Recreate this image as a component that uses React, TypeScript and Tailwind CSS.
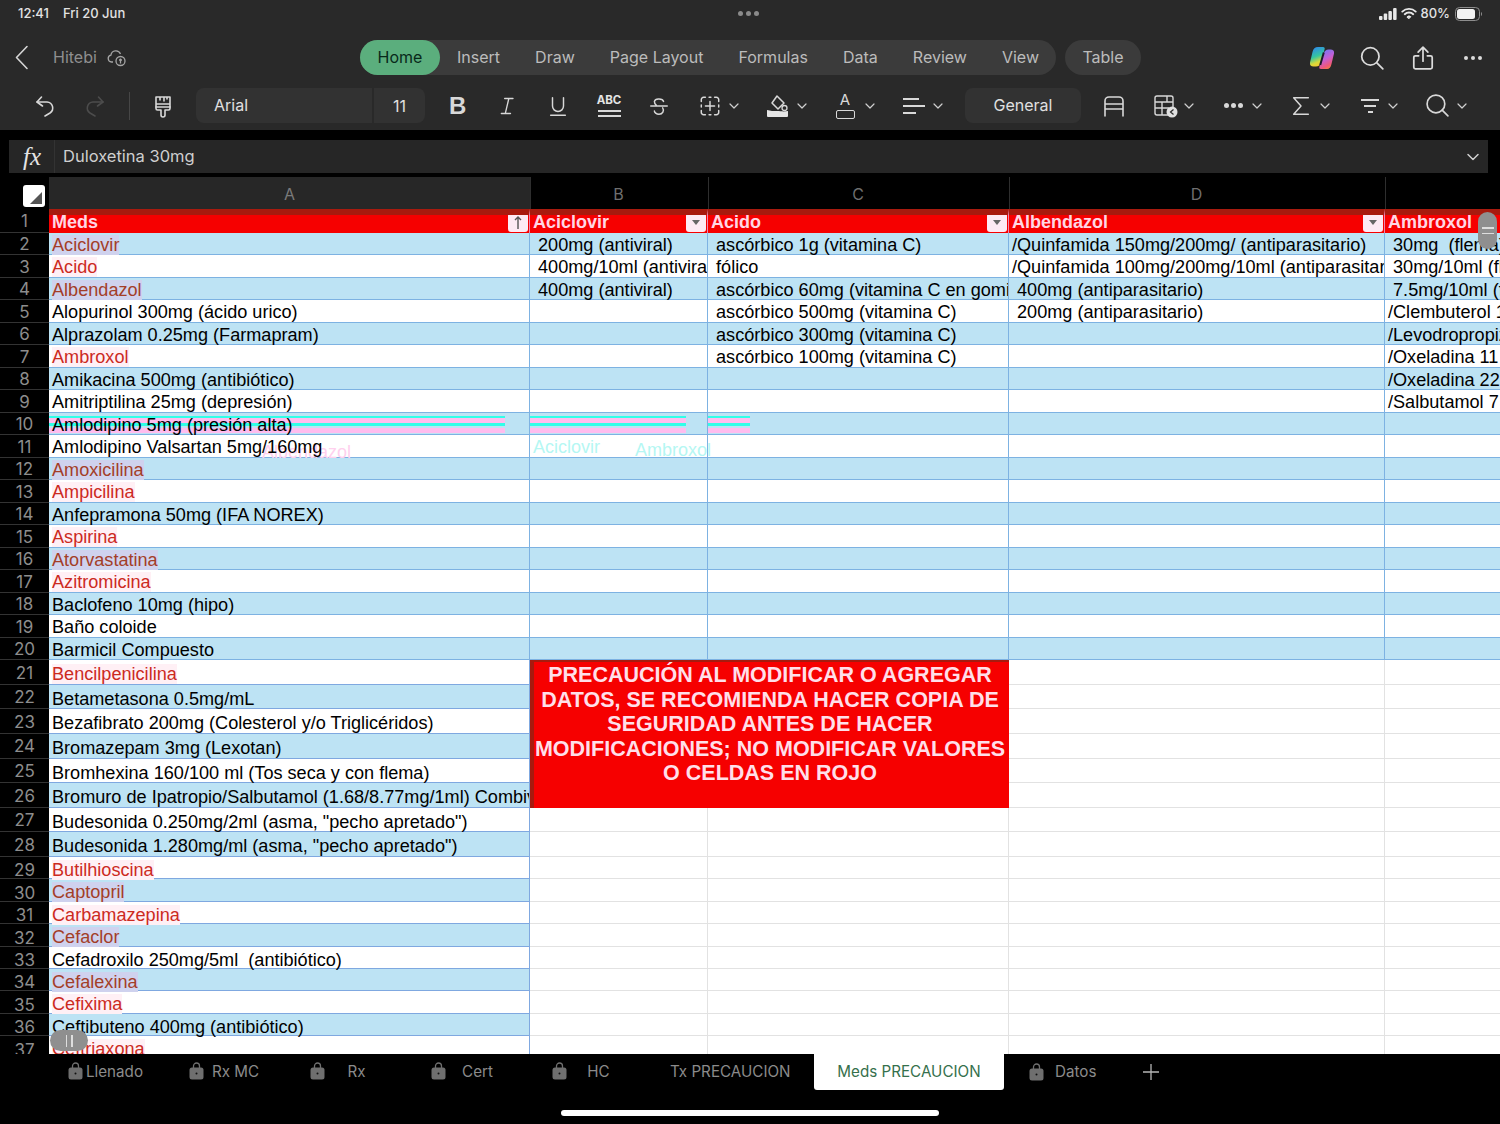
import type { ReactNode } from "react";

type Cell = string;

const BANDED: [string, boolean, Cell, Cell, Cell, Cell][] = [
  ["Aciclovir", true, " 200mg (antiviral)", " ascórbico 1g (vitamina C)", "/Quinfamida 150mg/200mg/ (antiparasitario)", " 30mg  (flema)"],
  ["Acido", true, " 400mg/10ml (antiviral)", " fólico", "/Quinfamida 100mg/200mg/10ml (antiparasitario)", " 30mg/10ml (flema)"],
  ["Albendazol", true, " 400mg (antiviral)", " ascórbico 60mg (vitamina C en gomitas)", " 400mg (antiparasitario)", " 7.5mg/10ml (flema)"],
  ["Alopurinol 300mg (ácido urico)", false, "", " ascórbico 500mg (vitamina C)", " 200mg (antiparasitario)", "/Clembuterol 1"],
  ["Alprazolam 0.25mg (Farmapram)", false, "", " ascórbico 300mg (vitamina C)", "", "/Levodropropizina"],
  ["Ambroxol", true, "", " ascórbico 100mg (vitamina C)", "", "/Oxeladina 11"],
  ["Amikacina 500mg (antibiótico)", false, "", "", "", "/Oxeladina 22"],
  ["Amitriptilina 25mg (depresión)", false, "", "", "", "/Salbutamol 7"],
  ["Amlodipino 5mg (presión alta)", false, "", "", "", ""],
  ["Amlodipino Valsartan 5mg/160mg", false, "", "", "", ""],
  ["Amoxicilina", true, "", "", "", ""],
  ["Ampicilina", true, "", "", "", ""],
  ["Anfepramona 50mg (IFA NOREX)", false, "", "", "", ""],
  ["Aspirina", true, "", "", "", ""],
  ["Atorvastatina", true, "", "", "", ""],
  ["Azitromicina", true, "", "", "", ""],
  ["Baclofeno 10mg (hipo)", false, "", "", "", ""],
  ["Baño coloide", false, "", "", "", ""],
  ["Barmicil Compuesto", false, "", "", "", ""],
];

const LOWER: [string, boolean][] = [
  ["Bencilpenicilina", true],
  ["Betametasona 0.5mg/mL", false],
  ["Bezafibrato 200mg (Colesterol y/o Triglicéridos)", false],
  ["Bromazepam 3mg (Lexotan)", false],
  ["Bromhexina 160/100 ml (Tos seca y con flema)", false],
  ["Bromuro de Ipatropio/Salbutamol (1.68/8.77mg/1ml) Combivent", false],
  ['Budesonida 0.250mg/2ml (asma, "pecho apretado")', false],
  ['Budesonida 1.280mg/ml (asma, "pecho apretado")', false],
  ["Butilhioscina", true],
  ["Captopril", true],
  ["Carbamazepina", true],
  ["Cefaclor", true],
  ["Cefadroxilo 250mg/5ml  (antibiótico)", false],
  ["Cefalexina", true],
  ["Cefixima", true],
  ["Ceftibuteno 400mg (antibiótico)", false],
  ["Ceftriaxona", true],
];

const RIBBON = ["Insert", "Draw", "Page Layout", "Formulas", "Data", "Review", "View"];

// row 10 carries colour stripes from the capture, they sit behind the cell text
const TEAR_A =
  "bg-[linear-gradient(#bde3f4_0_3px,#30ffe8_3px_5px,#ffbcee_5px_10px,#30ffe8_10px_13px,#bde3f4_13px_15px,#ffbcee_15px_20px,#bde3f4_20px)] bg-[size:456px_100%] bg-no-repeat";
const TEAR_B =
  "bg-[linear-gradient(#bde3f4_0_3px,#30ffe8_3px_5px,#ffbcee_5px_10px,#30ffe8_10px_13px,#bde3f4_13px_15px,#ffbcee_15px_20px,#bde3f4_20px)] bg-[size:156px_100%] bg-no-repeat";
const TEAR_C =
  "bg-[linear-gradient(#bde3f4_0_3px,#30ffe8_3px_5px,#ffbcee_5px_10px,#30ffe8_10px_13px,#bde3f4_13px_15px,#ffbcee_15px_20px,#bde3f4_20px)] bg-[size:42px_100%] bg-no-repeat";

function Ico({ size = 24, className = "", children }: { size?: number; className?: string; children: ReactNode }) {
  return (
    <svg
      width={size}
      height={size}
      viewBox="0 0 24 24"
      fill="none"
      stroke="currentColor"
      strokeWidth={1.6}
      strokeLinecap="round"
      strokeLinejoin="round"
      className={`shrink-0 ${className}`}
    >
      {children}
    </svg>
  );
}

function Chev({ className = "" }: { className?: string }) {
  return (
    <svg width="10" height="6" viewBox="0 0 10 6" fill="none" stroke="#cfcfcf" strokeWidth={1.2} strokeLinecap="round" strokeLinejoin="round" className={`shrink-0 ${className}`}>
      <path d="M1 1l4 4 4-4" />
    </svg>
  );
}

function Lock({ className = "" }: { className?: string }) {
  return (
    <svg width="15" height="18" viewBox="0 0 15 18" className={className}>
      <path d="M4.5 6V4a3 3 0 016 0v2" fill="none" stroke="#6f6f6f" strokeWidth={1.3} />
      <rect x="0.5" y="5.5" width="14" height="12" rx="2.5" fill="#6f6f6f" />
      <circle cx="7.5" cy="11.5" r="1" fill="#111" />
    </svg>
  );
}

function Tab({ name }: { name: string }) {
  return (
    <div className="relative flex h-[36px] w-[121px] items-center justify-center text-[15.2px] text-[#8b8b8b]">
      <Lock className="absolute left-[14px] top-[8px]" />
      {name}
    </div>
  );
}

function RedName({ text, band }: { text: string; band: boolean }) {
  return <span className={band ? "bg-[#cfd2ee] text-[#a33e28]" : "bg-[#fff0f5] text-[#cc2a1e]"}>{text}</span>;
}

function RowNum({ n }: { n: number }) {
  const pad = n <= 28 ? "pt-[3px]" : "pt-[7px]";
  return (
    <div className={`flex items-center justify-center overflow-hidden border-b border-[#333] bg-black text-[17px] text-[#8d8d8d] [font-family:Inter,sans-serif] ${pad}`}>
      {n}
    </div>
  );
}

function DataCell({ value, band, last, extra = "" }: { value: string; band: boolean; last?: boolean; extra?: string }) {
  return (
    <div
      className={`overflow-x-clip whitespace-pre border-b border-[#7db2e2] pl-[3px] leading-[24px] text-black ${last ? "" : "border-r"} ${
        band ? "bg-[#bde3f4]" : "bg-white"
      } ${extra}`}
    >
      <span className="relative z-[1]">{value}</span>
    </div>
  );
}

function HeadCell({ title, up }: { title: string; up?: boolean }) {
  return (
    <div className="relative flex items-end overflow-hidden whitespace-nowrap border-t-[6px] border-r border-[#a81a0e] border-r-[#e889b0] bg-[#f60000] pb-px pl-[3px] text-[18px] font-bold leading-[19px] text-[#ffd6e4]">
      {title}
      <span className="absolute bottom-[1px] right-[1px] flex h-[19px] w-[20px] items-center justify-center rounded-[3px] bg-[#fdeaf4]">
        {up ? (
          <svg width="8" height="13" viewBox="0 0 8 13" fill="none" stroke="#555" strokeWidth={1.4}>
            <path d="M4 13V1M1 4l3-3 3 3" />
          </svg>
        ) : (
          <span className="h-0 w-0 border-x-[4px] border-t-[5px] border-x-transparent border-t-[#666]" />
        )}
      </span>
    </div>
  );
}

export default function App() {
  return (
    <div className="relative flex h-[1124px] w-[1500px] flex-col overflow-hidden bg-black [font-family:Inter,sans-serif]">
      {/* top chrome */}
      <div className="h-[130px] shrink-0 bg-[#292929]">
        <div className="relative flex h-[26px] items-center pl-[18px] pr-[17px] pt-[1px] text-[13px] font-medium text-[#e2e2e2]">
          <span>12:41</span>
          <span className="ml-[14px]">Fri 20 Jun</span>
          <div className="absolute left-[738px] top-[11px] flex gap-[3px]">
            <span className="h-[5px] w-[5px] rounded-full bg-[#8a8a8a]" />
            <span className="h-[5px] w-[5px] rounded-full bg-[#8a8a8a]" />
            <span className="h-[5px] w-[5px] rounded-full bg-[#8a8a8a]" />
          </div>
          <div className="ml-auto flex items-center gap-[4px]">
            <svg width="18" height="12" viewBox="0 0 18 12" fill="#e8e8e8">
              <rect x="0" y="8" width="3.5" height="4" rx="1" />
              <rect x="4.7" y="5.5" width="3.5" height="6.500" rx="1" />
              <rect x="9.4" y="3" width="3.5" height="9" rx="1" />
              <rect x="14.1" y="0" width="3.5" height="12" rx="1" />
            </svg>
            <svg width="16" height="13" viewBox="0 0 16 13" fill="none" stroke="#e8e8e8" strokeWidth={1.9} strokeLinecap="round">
              <path d="M1.3 4.6a9.6 9.6 0 0113.4 0M3.8 7.2a6 6 0 018.4 0" />
              <path d="M6.2 9.7a2.6 2.6 0 013.6 0L8 11.6z" fill="#e8e8e8" strokeWidth={1} />
            </svg>
            <span>80%</span>
            <svg width="28" height="14" viewBox="0 0 28 14" className="ml-[1px]">
              <rect x="0.5" y="0.5" width="24" height="13" rx="4" fill="none" stroke="#8d8d8d" />
              <rect x="2" y="2" width="18" height="10" rx="2.5" fill="#f2f2f2" />
              <path d="M26 5v4a2 2 0 001-2 2 2 0 00-1-2z" fill="#8d8d8d" />
            </svg>
          </div>
        </div>

        <div className="mt-[14px] flex h-[35px] items-center">
          <div className="flex w-[360px] items-center text-[#c8c8c8]">
            <svg width="14" height="25" viewBox="0 0 14 25" fill="none" stroke="#d5d5d5" strokeWidth={1.6} strokeLinecap="round" strokeLinejoin="round" className="ml-[15px]">
              <path d="M12 1.5L1.5 12.5 12 23.5" />
            </svg>
            <span className="ml-[24px] pb-[2px] text-[16px] text-[#8f8f8f]">Hitebi</span>
            <svg width="20" height="20" viewBox="0 0 20 20" fill="none" stroke="#a5a5a5" strokeWidth={1.3} className="ml-[10px]">
              <path d="M6 14H4.500a3.500 3.500 0 01-.6-6.900A5 5 0 0113.500 6" />
              <circle cx="13.500" cy="13" r="4.500" />
              <path d="M13.500 10.500v5M12 12h3" />
            </svg>
          </div>
          <div className="flex h-[35px] w-[696px] items-center rounded-full bg-[#3b3b3b] text-[16px] text-[#bcbcbc]">
            <span className="flex h-[35px] w-[80px] items-center justify-center rounded-full bg-[#5bae7d] pb-[2px] text-[#08291a]">Home</span>
            <div className="flex flex-1 justify-between pb-[2px] pl-[17px] pr-[17px]">
              {RIBBON.map((t) => (
                <span key={t}>{t}</span>
              ))}
            </div>
          </div>
          <span className="ml-[9px] flex h-[35px] w-[76px] items-center justify-center rounded-full bg-[#3b3b3b] pb-[2px] text-[16px] text-[#bcbcbc]">Table</span>
          <div className="ml-[168px] flex items-center text-[#dcdcdc]">
            <svg width="26" height="26" viewBox="0 0 26 26">
              <defs>
                <linearGradient id="cpA" x1="0.2" y1="0" x2="0.5" y2="1">
                  <stop offset="0" stopColor="#2f86ef" />
                  <stop offset="0.5" stopColor="#35c6a0" />
                  <stop offset="0.8" stopColor="#d8d93a" />
                  <stop offset="1" stopColor="#f6c92f" />
                </linearGradient>
                <linearGradient id="cpB" x1="0.3" y1="0" x2="0.7" y2="1">
                  <stop offset="0" stopColor="#6f78f2" />
                  <stop offset="0.45" stopColor="#c45fd6" />
                  <stop offset="0.8" stopColor="#f0587a" />
                  <stop offset="1" stopColor="#f2843e" />
                </linearGradient>
              </defs>
              <path d="M9 2h5c1.500 0 2 1 1.600 2.300L12 17c-.8 3-2.500 4.500-5 4.500H4.500C2 21.500.5 20 1 17.500L3.500 7C4.300 3.800 6 2 9 2z" fill="url(#cpA)" />
              <path d="M18 24h-6c-1.500 0-2-1-1.600-2.300L14.500 9c.8-3 2.500-4.500 5-4.500h2c2.500 0 4 1.500 3.500 4l-2.500 10.500C21.700 22.200 20.500 24 18 24z" fill="url(#cpB)" />
              <path d="M14.800 7.500L11.200 20" stroke="#1c1c2a" strokeWidth={2} />
            </svg>
            <Ico size={26} className="ml-[24px]">
              <circle cx="10.500" cy="10.500" r="8" />
              <path d="M16.500 16.500l5.500 5.500" />
            </Ico>
            <Ico size={26} className="ml-[25px]">
              <path d="M12 15V2M7.500 6.500L12 2l4.500 4.500" />
              <path d="M8 10H5a1.500 1.500 0 00-1.500 1.500v9A1.500 1.500 0 005 22h14a1.500 1.500 0 001.500-1.500v-9A1.500 1.500 0 0019 10h-3" />
            </Ico>
            <div className="ml-[28px] flex gap-[3px]">
              <span className="h-[4px] w-[4px] rounded-full bg-[#dcdcdc]" />
              <span className="h-[4px] w-[4px] rounded-full bg-[#dcdcdc]" />
              <span className="h-[4px] w-[4px] rounded-full bg-[#dcdcdc]" />
            </div>
          </div>
        </div>

        <div className="mt-[13px] flex h-[35px] items-center text-[#d8d8d8]">
          <Ico size={24} className="ml-[34px]">
            <path d="M3 8h10a6 6 0 013 11l-5 3" />
            <path d="M7.500 3L3 8l5.500 4" />
          </Ico>
          <Ico size={24} className="ml-[24px] text-[#4c4c4c]">
            <path d="M21 8H11a6 6 0 00-3 11l5 3" />
            <path d="M16.500 3L21 8l-5.500 4" />
          </Ico>
          <span className="ml-[23px] h-[28px] w-px bg-[#464646]" />
          <Ico size={24} className="ml-[21px]">
            <path d="M5 3h14v10H5zM5 10h14M9 3v3M13 3v4M16 3v2" />
            <path d="M5 13v1.500A1.500 1.500 0 006.500 16H10v5a2 2 0 004 0v-5h3.500a1.500 1.500 0 001.500-1.500V13" />
          </Ico>
          <div className="ml-[21px] flex h-[35px] w-[176px] items-center rounded-l-[8px] bg-[#323232] pb-[2px] pl-[18px] text-[16px] text-[#e0e0e0]">Arial</div>
          <div className="ml-[2px] flex h-[35px] w-[51px] items-center justify-center rounded-r-[8px] bg-[#323232] text-[16px] text-[#e0e0e0]">11</div>
          <span className="ml-[24px] w-[15px] text-[24px] font-bold leading-none text-[#d8d8d8] [font-family:'Liberation_Sans',sans-serif]">B</span>
          <Ico size={20} className="ml-[34px]">
            <path d="M8 3h10M13 3L9 20M4 21h11" />
          </Ico>
          <Ico size={22} className="ml-[29px]">
            <path d="M6 3v9a6 6 0 0012 0V3M4 22h16" />
          </Ico>
          <div className="ml-[28px] flex w-[24px] flex-col items-center">
            <span className="text-[11.5px] font-bold leading-[13px] text-[#e4e4e4]">ABC</span>
            <span className="mt-[3px] h-[2px] w-[23px] bg-[#d8d8d8]" />
            <span className="mt-[3px] h-[2px] w-[23px] bg-[#d8d8d8]" />
          </div>
          <Ico size={22} className="ml-[27px]">
            <path d="M17 7c-1-3-9-4-10 0 0 1.500.5 3 2 4M3 12h18M16 14c2 3 0 7-4 7-3 0-5-2-5-3.500" />
          </Ico>
          <Ico size={22} className="ml-[29px]">
            <path d="M7 2.500H5A2.500 2.500 0 002.500 5v2M2.500 11v2M2.500 17v2A2.500 2.500 0 005 21.500h2M11 2.500h2M11 21.500h2M17 2.500h2A2.500 2.500 0 0121.500 5v2M21.500 11v2M21.500 17v2a2.500 2.500 0 01-2.500 2.500h-2" />
            <path d="M12 7v10M7 12h10" />
          </Ico>
          <Chev className="ml-[8px]" />
          <svg width="24" height="24" viewBox="0 0 24 24" className="ml-[27px] shrink-0">
            <path d="M11 2l7 7-6 6-6-6z" fill="none" stroke="#d8d8d8" strokeWidth={1.5} strokeLinejoin="round" />
            <circle cx="18.500" cy="14" r="2.500" fill="none" stroke="#d8d8d8" strokeWidth={1.3} />
            <path d="M1 16c4 1 6 1 10 1s6 1 11 0v5a1 1 0 01-1 1H2a1 1 0 01-1-1z" fill="#e6e6e6" />
          </svg>
          <Chev className="ml-[7px]" />
          <div className="ml-[28px] flex w-[20px] flex-col items-center">
            <span className="text-[15px] leading-[16px] text-[#d8d8d8]">A</span>
            <span className="mt-[2px] h-[9px] w-[19px] rounded-[2px] border-[1.5px] border-[#d8d8d8]" />
          </div>
          <Chev className="ml-[10px]" />
          <div className="ml-[28px] flex w-[22px] flex-col gap-[5px]">
            <span className="h-[2px] w-[16px] bg-[#d8d8d8]" />
            <span className="h-[2px] w-[22px] bg-[#d8d8d8]" />
            <span className="h-[2px] w-[13px] bg-[#d8d8d8]" />
          </div>
          <Chev className="ml-[8px]" />
          <div className="ml-[22px] flex h-[35px] w-[116px] items-center justify-center rounded-[8px] bg-[#323232] pb-[2px] text-[16px] text-[#e0e0e0]">General</div>
          <Ico size={24} className="ml-[21px]">
            <path d="M3 22V7a4 4 0 014-4h10a4 4 0 014 4v15M3 10h18M3 15h18" />
          </Ico>
          <svg width="26" height="26" viewBox="0 0 26 26" fill="none" stroke="#d8d8d8" strokeWidth={1.4} className="ml-[27px] shrink-0">
            <path d="M15 22H4a2 2 0 01-2-2V5a2 2 0 012-2h14a2 2 0 012 2v9M2 9h18M2 15h14M9 9v13M14 3v6" />
            <circle cx="19" cy="19" r="5.500" fill="#e0e0e0" stroke="none" />
            <path d="M20.500 16.500L17.500 19l3 2.500" stroke="#292929" strokeWidth={1.2} />
          </svg>
          <Chev className="ml-[5px]" />
          <div className="ml-[30px] flex w-[19px] justify-between">
            <span className="h-[5px] w-[5px] rounded-full bg-[#d8d8d8]" />
            <span className="h-[5px] w-[5px] rounded-full bg-[#d8d8d8]" />
            <span className="h-[5px] w-[5px] rounded-full bg-[#d8d8d8]" />
          </div>
          <Chev className="ml-[9px]" />
          <Ico size={22} className="ml-[28px]">
            <path d="M20 3H4l8 9-8 9h16" />
          </Ico>
          <Chev className="ml-[8px]" />
          <div className="ml-[30px] flex w-[20px] flex-col items-center gap-[4px]">
            <span className="h-[2px] w-[18px] bg-[#d8d8d8]" />
            <span className="h-[2px] w-[12px] bg-[#d8d8d8]" />
            <span className="h-[2px] w-[5px] bg-[#d8d8d8]" />
          </div>
          <Chev className="ml-[8px]" />
          <Ico size={25} className="ml-[27px]">
            <circle cx="10.500" cy="10.500" r="8.500" />
            <path d="M16.500 16.500l5.500 5.500" />
          </Ico>
          <Chev className="ml-[7px]" />
        </div>
      </div>

      {/* formula bar */}
      <div className="ml-[9px] mt-[10px] flex h-[33px] w-[1479px] shrink-0 items-center bg-[#262626] text-[#cfcfcf]">
        <span className="w-[46px] border-r border-[#333] pl-[14px] text-[25px] italic leading-[33px] text-[#e4e4e4] [font-family:'Liberation_Serif',serif]">fx</span>
        <span className="ml-[8px] text-[16.5px]">Duloxetina 30mg</span>
        <Chev className="ml-auto mr-[10px] scale-125" />
      </div>

      {/* sheet */}
      <div className="relative mt-[4px] h-[877px] shrink-0 overflow-hidden bg-white">
        <div className="grid grid-cols-[49px_481px_178px_301px_376px_115px] grid-rows-[32px_23.5px_repeat(19,22.5px)_repeat(8,24.625px)_repeat(9,22.4px)] text-[18.12px] [font-family:'Liberation_Sans',Arial,sans-serif]">
          <div className="relative bg-black">
            <span className="absolute left-[23px] top-[8px] flex h-[22px] w-[22px] items-end justify-end rounded-[3px] bg-white p-[3px]">
              <span className="h-0 w-0 border-b-[12px] border-l-[12px] border-b-[#555] border-l-transparent" />
            </span>
          </div>
          <div className="flex items-center justify-center bg-[#272727] pt-[2px] text-[16px] text-[#7a7a7a] [font-family:Inter,sans-serif]">A</div>
          {["B", "C", "D", ""].map((c) => (
            <div key={c} className="flex items-center justify-center border-l border-[#2e2e2e] bg-black pr-[2px] pt-[2px] text-[16px] text-[#6f6f6f] [font-family:Inter,sans-serif]">
              {c}
            </div>
          ))}

          <RowNum n={1} />
          <HeadCell title="Meds" up />
          <HeadCell title="Aciclovir" />
          <HeadCell title="Acido" />
          <HeadCell title="Albendazol" />
          <div className="flex items-end overflow-hidden whitespace-nowrap border-t-[6px] border-[#a81a0e] bg-[#f60000] pb-px pl-[3px] text-[18px] font-bold leading-[19px] text-[#ffd6e4]">Ambroxol</div>

          {BANDED.map((r, i) => {
            const band = i % 2 === 0;
            const torn = i === 8;
            return [
              <RowNum key={`n${i}`} n={i + 2} />,
              <div
                key={`a${i}`}
                className={`overflow-x-clip whitespace-pre border-b border-r border-[#7db2e2] pl-[3px] leading-[24px] text-black ${band ? "bg-[#bde3f4]" : "bg-white"} ${torn ? TEAR_A : ""}`}
              >
                <span className="relative z-[1]">{r[1] ? <RedName text={r[0]} band={band} /> : r[0]}</span>
              </div>,
              <DataCell key={`b${i}`} value={r[2]} band={band} extra={torn ? TEAR_B : ""} />,
              <DataCell key={`c${i}`} value={r[3]} band={band} extra={torn ? TEAR_C : ""} />,
              <DataCell key={`d${i}`} value={r[4]} band={band} />,
              <DataCell key={`e${i}`} value={r[5]} band={band} last />,
            ];
          })}

          {LOWER.map((r, i) => {
            const band = i % 2 === 1;
            const n = i + 21;
            const tall = n <= 28;
            return [
              <RowNum key={`ln${i}`} n={n} />,
              <div
                key={`la${i}`}
                className={`overflow-x-clip whitespace-pre border-b border-r border-[#7fa8e0] pl-[3px] text-black ${tall ? "leading-[28px]" : "leading-[26px]"} ${band ? "bg-[#bde3f4]" : "bg-white"}`}
              >
                <span className="relative z-[1]">{r[1] ? <RedName text={r[0]} band={band} /> : r[0]}</span>
              </div>,
              i === 0 ? (
                <div
                  key="warn"
                  className="col-span-2 row-span-6 border-l-[4px] border-t-[2px] border-[#a81a0e] bg-[#f60000] pr-[3px] pt-px text-center text-[21.5px] font-bold leading-[24.6px] text-[#ffdfe9]"
                >
                  PRECAUCIÓN AL MODIFICAR O AGREGAR DATOS, SE RECOMIENDA HACER COPIA DE SEGURIDAD ANTES DE HACER MODIFICACIONES; NO MODIFICAR VALORES O CELDAS EN ROJO
                </div>
              ) : null,
              !tall || i > 5 ? <div key={`lb${i}`} className="border-b border-r border-[#e2e2e2] bg-white" /> : null,
              !tall || i > 5 ? <div key={`lc${i}`} className="border-b border-r border-[#e2e2e2] bg-white" /> : null,
              <div key={`ld${i}`} className="border-b border-r border-[#e2e2e2] bg-white" />,
              <div key={`le${i}`} className="border-b border-[#e2e2e2] bg-white" />,
            ];
          })}
        </div>

        {/* torn header ghosts left on the capture, row 11 */}
        <div className="pointer-events-none absolute left-[533px] top-[260px] z-[2] text-[18px] leading-[20px] text-[#b5f7f3] [font-family:'Liberation_Sans',sans-serif]">Aciclovir</div>
        <div className="pointer-events-none absolute left-[635px] top-[263px] z-[2] text-[18px] leading-[20px] text-[#b5f7f3] [font-family:'Liberation_Sans',sans-serif]">Ambroxol</div>
        <div className="pointer-events-none absolute left-[262px] top-[265px] text-[18px] leading-[20px] text-[#ffd0ee] [font-family:'Liberation_Sans',sans-serif]">Albendazol</div>

        {/* scroll thumbs */}
        <div className="absolute left-[1478px] top-[35px] z-10 flex h-[37px] w-[19px] flex-col items-center justify-center gap-[4px] rounded-full bg-[#8f8f8f]">
          <span className="h-[1.5px] w-[12px] bg-[#dedede]" />
          <span className="h-[1.5px] w-[12px] bg-[#dedede]" />
        </div>
        <div className="absolute left-[50px] top-[853px] z-10 flex h-[21px] w-[38px] items-center justify-center gap-[4px] rounded-full bg-[#8f8f8f]">
          <span className="h-[12px] w-[1.5px] bg-[#dedede]" />
          <span className="h-[12px] w-[1.5px] bg-[#dedede]" />
        </div>
      </div>

      {/* sheet tabs */}
      <div className="flex-1 bg-black">
        <div className="flex pl-[54px]">
          <Tab name="Llenado" />
          <Tab name="Rx MC" />
          <Tab name="Rx" />
          <Tab name="Cert" />
          <Tab name="HC" />
          <div className="flex h-[36px] w-[155px] items-center pl-[11px] text-[15.2px] text-[#8b8b8b]">Tx PRECAUCION</div>
          <div className="flex h-[36px] w-[190px] items-center justify-center rounded-b-[3px] bg-white text-[15.2px] text-[#35704c]">Meds PRECAUCION</div>
          <div className="flex h-[36px] items-center pl-[25px] text-[15.2px] text-[#8b8b8b]">
            <Lock />
            <span className="ml-[11px]">Datos</span>
          </div>
          <svg width="16" height="16" viewBox="0 0 16 16" stroke="#b5b5b5" strokeWidth={1.3} className="ml-[47px] mt-[10px]">
            <path d="M8 0v16M0 8h16" />
          </svg>
        </div>
        <div className="ml-[561px] mt-[20px] h-[6px] w-[378px] rounded-full bg-white" />
      </div>
    </div>
  );
}
